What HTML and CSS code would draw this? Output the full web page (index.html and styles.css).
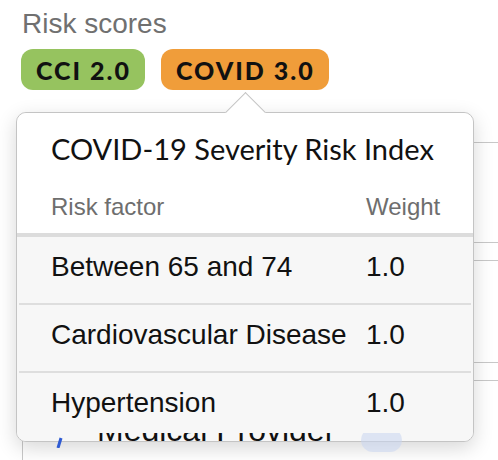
FILE: index.html
```html
<!DOCTYPE html>
<html>
<head>
<meta charset="utf-8">
<link rel="stylesheet" href="styles.css">
</head>
<body>
<div class="page">
  <h2 class="section-title">Risk scores</h2>
  <div class="badges">
    <span class="badge badge-cci">CCI 2.0</span>
    <span class="badge badge-covid">COVID 3.0</span>
  </div>

  <div class="record">
    <div class="rec-row rec-tall"></div>
    <div class="rec-row rec-thin"></div>
    <div class="rec-row rec-tall2"></div>
    <div class="rec-row rec-thin"></div>
    <div class="rec-row provider">
      <svg class="provider-icon" width="20" height="24" viewBox="0 0 20 24"><path d="M9 24 L12 14" stroke="#2f5bd3" stroke-width="3" fill="none"/></svg>
      <span class="provider-name">Medical Provider</span>
      <span class="pill"></span>
    </div>
  </div>

  <div class="popover">
    <div class="popover-head">
      <div class="popover-title">COVID-19 Severity Risk Index</div>
      <div class="grid head-row">
        <span>Risk factor</span>
        <span>Weight</span>
      </div>
    </div>
    <div class="popover-body">
      <div class="grid row"><span>Between 65 and 74</span><span>1.0</span></div>
      <div class="grid row"><span>Cardiovascular Disease</span><span>1.0</span></div>
      <div class="grid row"><span>Hypertension</span><span>1.0</span></div>
    </div>
  </div>
</div>
</body>
</html>
```

FILE: styles.css
```css
* { box-sizing: border-box; }

html, body {
  margin: 0;
  padding: 0;
  background: #ffffff;
}

.page {
  position: relative;
  width: 498px;
  height: 460px;
  overflow: hidden;
  font-family: "Liberation Sans", Arial, sans-serif;
  color: #111;
}

.section-title {
  margin: 0;
  padding: 8px 0 0 22px;
  font-size: 28px;
  line-height: 32px;
  font-weight: 400;
  color: #707070;
}

.badges {
  display: flex;
  gap: 16px;
  margin: 9px 0 0 21px;
}

.badge {
  display: inline-flex;
  align-items: center;
  height: 41px;
  padding: 0 14px 0 15px;
  border-radius: 12px;
  font-family: Lato, "Open Sans", sans-serif;
  font-weight: 900;
  font-size: 25px;
  letter-spacing: 2px;
  color: #111;
}

.badge-cci { background: #96c35f; }
.badge-covid { background: #f09d3a; }

/* background record, partly hidden under the popover */
.record {
  margin: 52px 0 0 22px;
  border-left: 1px solid #c8c8c8;
  border-top: 1px solid #c8c8c8;
}

.rec-row { border-bottom: 1px solid #c8c8c8; }
.rec-tall { height: 100px; }
.rec-thin { height: 18px; }
.rec-tall2 { height: 102px; }

.provider {
  position: relative;
  z-index: 3;
  border-bottom: none;
  display: grid;
  grid-template-columns: 74px 264px auto;
  align-items: start;
  padding-top: 31px;
  height: 79px;
  font-size: 32px;
  line-height: 36px;
  clip-path: inset(52px 0 0 0);
}

.provider-icon { margin: 12px 0 0 26px; }
.provider-name { white-space: nowrap; color: #111; }

.pill {
  display: block;
  width: 41px;
  height: 24px;
  margin-top: 16px;
  border-radius: 12px;
  background: rgba(200, 214, 240, 0.55);
}

/* popover */
.popover {
  position: absolute;
  top: 112px;
  left: 16px;
  width: 458px;
  height: 330px;
  background: #ffffff;
  border: 1px solid #c4c4c4;
  border-radius: 10px;
  box-shadow: 0 6px 20px rgba(0, 0, 0, 0.16);
}

.popover::before {
  content: "";
  position: absolute;
  top: -15px;
  left: 214px;
  width: 28px;
  height: 28px;
  background: #ffffff;
  border-top: 1px solid #c4c4c4;
  border-left: 1px solid #c4c4c4;
  transform: rotate(45deg);
}

.popover-head {
  position: relative;
  height: 120px;
  padding-top: 18px;
  border-radius: 10px 10px 0 0;
  background: #ffffff;
}

.popover-title {
  padding-left: 34px;
  font-family: Lato, "Open Sans", sans-serif;
  font-size: 29px;
  line-height: 36px;
  color: #111;
}

.grid {
  display: grid;
  grid-template-columns: 315px 1fr;
}

.head-row {
  margin-top: 25px;
  padding-left: 34px;
  font-size: 24px;
  line-height: 30px;
  color: #6e6e6e;
}

.popover-body {
  background: #f7f7f7;
  border-top: 4px solid #dcdcdc;
  padding: 0 2px 2px;
  border-radius: 0 0 9px 9px;
  height: 208px;
}

.row {
  padding: 14px 0 20px 32px;
  font-size: 28px;
  line-height: 32px;
  color: #111;
  border-bottom: 2px solid #dedede;
}

.row:last-child { border-bottom: none; }
```
